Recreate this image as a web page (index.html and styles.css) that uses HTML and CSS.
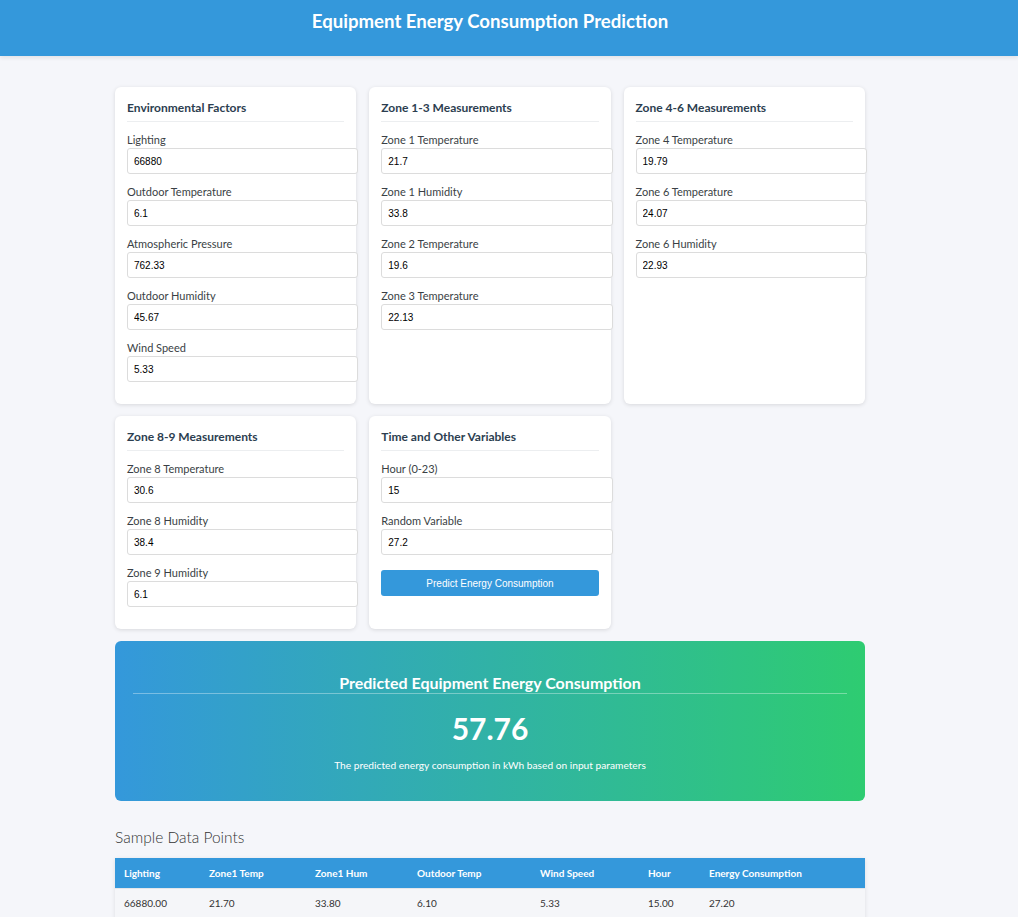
FILE: index.html
```html
<!DOCTYPE html>
<html lang="en">
<head>
<meta charset="utf-8">
<title>Equipment Energy Consumption Prediction</title>
<link rel="stylesheet" href="styles.css">
</head>
<body>
<header class="topbar">
  <div class="topbar-inner">
    <h1 class="page-title">Equipment Energy Consumption Prediction</h1>
  </div>
</header>
<main class="page">
  <div class="content">
    <div class="cards">
      <section class="card">
        <h3 class="card-title">Environmental Factors</h3>
        <div class="field"><label>Lighting</label><input type="text" value="66880"></div>
        <div class="field"><label>Outdoor Temperature</label><input type="text" value="6.1"></div>
        <div class="field"><label>Atmospheric Pressure</label><input type="text" value="762.33"></div>
        <div class="field"><label>Outdoor Humidity</label><input type="text" value="45.67"></div>
        <div class="field"><label>Wind Speed</label><input type="text" value="5.33"></div>
      </section>
      <section class="card">
        <h3 class="card-title">Zone 1-3 Measurements</h3>
        <div class="field"><label>Zone 1 Temperature</label><input type="text" value="21.7"></div>
        <div class="field"><label>Zone 1 Humidity</label><input type="text" value="33.8"></div>
        <div class="field"><label>Zone 2 Temperature</label><input type="text" value="19.6"></div>
        <div class="field"><label>Zone 3 Temperature</label><input type="text" value="22.13"></div>
      </section>
      <section class="card">
        <h3 class="card-title">Zone 4-6 Measurements</h3>
        <div class="field"><label>Zone 4 Temperature</label><input type="text" value="19.79"></div>
        <div class="field"><label>Zone 6 Temperature</label><input type="text" value="24.07"></div>
        <div class="field"><label>Zone 6 Humidity</label><input type="text" value="22.93"></div>
      </section>
      <section class="card">
        <h3 class="card-title">Zone 8-9 Measurements</h3>
        <div class="field"><label>Zone 8 Temperature</label><input type="text" value="30.6"></div>
        <div class="field"><label>Zone 8 Humidity</label><input type="text" value="38.4"></div>
        <div class="field"><label>Zone 9 Humidity</label><input type="text" value="6.1"></div>
      </section>
      <section class="card">
        <h3 class="card-title">Time and Other Variables</h3>
        <div class="field"><label>Hour (0-23)</label><input type="text" value="15"></div>
        <div class="field"><label>Random Variable</label><input type="text" value="27.2"></div>
        <button class="predict-btn" type="button">Predict Energy Consumption</button>
      </section>
    </div>

    <section class="result">
      <h3 class="result-title">Predicted Equipment Energy Consumption</h3>
      <div class="result-value">57.76</div>
      <p class="result-note">The predicted energy consumption in kWh based on input parameters</p>
    </section>

    <h2 class="section-title">Sample Data Points</h2>
    <table class="data-table">
      <thead>
        <tr><th class="c-light">Lighting</th><th class="c-z1t">Zone1 Temp</th><th class="c-z1h">Zone1 Hum</th><th class="c-out">Outdoor Temp</th><th class="c-wind">Wind Speed</th><th class="c-hour">Hour</th><th class="c-energy">Energy Consumption</th></tr>
      </thead>
      <tbody>
        <tr><td>66880.00</td><td>21.70</td><td>33.80</td><td>6.10</td><td>5.33</td><td>15.00</td><td>27.20</td></tr>
        <tr><td>64000.00</td><td>20.50</td><td>35.20</td><td>5.80</td><td>4.90</td><td>14.00</td><td>25.60</td></tr>
      </tbody>
    </table>
  </div>
</main>
</body>
</html>
```

FILE: styles.css
```css
* { margin: 0; padding: 0; }
body {
  background: #f5f6fa;
  font-family: Lato, "Open Sans", sans-serif;
  color: #333;
}
.topbar {
  background: #3498db;
  height: 56px;
  box-shadow: 0 2px 4px rgba(0,0,0,0.08);
}
.topbar-inner {
  width: 980px;
  text-align: center;
  padding-top: 8px;
}
.page-title {
  color: #fff;
  font-size: 18.6px;
  font-weight: 700;
  line-height: 26px;
}
.page {
  width: 980px;
  padding-top: 31px;
  padding-bottom: 40px;
}
.content {
  width: 750px;
  margin: 0 auto;
}
.cards {
  display: grid;
  grid-template-columns: repeat(3, 1fr);
  column-gap: 12.8px;
  row-gap: 12px;
}
.card {
  background: #fff;
  border-radius: 6px;
  box-shadow: 0 1px 4px rgba(0,0,0,0.12);
  padding: 12px;
}
.card-title {
  font-size: 12px;
  font-weight: 700;
  color: #2c3e50;
  line-height: 18px;
  padding-bottom: 4px;
  border-bottom: 1px solid #eceef0;
  margin-bottom: 10px;
}
.field { margin-bottom: 10px; }
.field label {
  display: block;
  font-size: 11px;
  line-height: 15px;
  color: #3a3f45;
  margin-bottom: 1px;
}
.field input {
  display: block;
  width: 100%;
  height: 16px;
  padding: 4px 6px;
  border: 1px solid #dcdcdc;
  border-radius: 3px;
  font-family: "Liberation Sans", Arial, sans-serif;
  font-size: 10px;
  color: #000;
  background: #fff;
}
.predict-btn {
  display: block;
  width: 100%;
  height: 26px;
  margin-top: 15px;
  background: #3498db;
  color: #fff;
  border: none;
  border-radius: 3px;
  font-family: "Liberation Sans", Arial, sans-serif;
  font-size: 10px;
}
.result {
  margin-top: 12px;
  height: 160px;
  box-sizing: border-box;
  padding: 33px 18px 0;
  border-radius: 6px;
  background: linear-gradient(to right, #3498db, #2ecc71);
  color: #fff;
  text-align: center;
}
.result-title {
  font-size: 16px;
  font-weight: 700;
  line-height: 18px;
  padding-bottom: 1px;
  border-bottom: 1px solid rgba(255,255,255,0.35);
}
.result-value {
  font-size: 30px;
  font-weight: 700;
  line-height: 40px;
  margin-top: 14px;
}
.result-note {
  font-size: 10.2px;
  margin-top: 11px;
}
.section-title {
  font-size: 15.5px;
  font-weight: 300;
  color: #333;
  margin-top: 25px;
  margin-bottom: 10px;
  line-height: 22px;
}
.data-table {
  width: 100%;
  table-layout: fixed;
  border-collapse: collapse;
  font-size: 10px;
  background: #fff;
  box-shadow: 0 1px 4px rgba(0,0,0,0.1);
}
.data-table th {
  background: #3498db;
  color: #fff;
  font-weight: 700;
  text-align: left;
  height: 30px;
  padding: 0 9px;
  border-bottom: 1px solid #e3e6ea;
}
.data-table .c-light { width: 85px; }
.data-table .c-z1t { width: 106px; }
.data-table .c-z1h { width: 102px; }
.data-table .c-out { width: 123px; }
.data-table .c-wind { width: 108px; }
.data-table .c-hour { width: 61px; }
.data-table .c-energy { width: 165px; }
.data-table th, .data-table td { box-sizing: border-box; }
.data-table td {
  height: 29px;
  padding: 0 9px;
  border-bottom: 1px solid #e8e8e8;
  background: #f5f6f9;
  color: #333;
}
```
